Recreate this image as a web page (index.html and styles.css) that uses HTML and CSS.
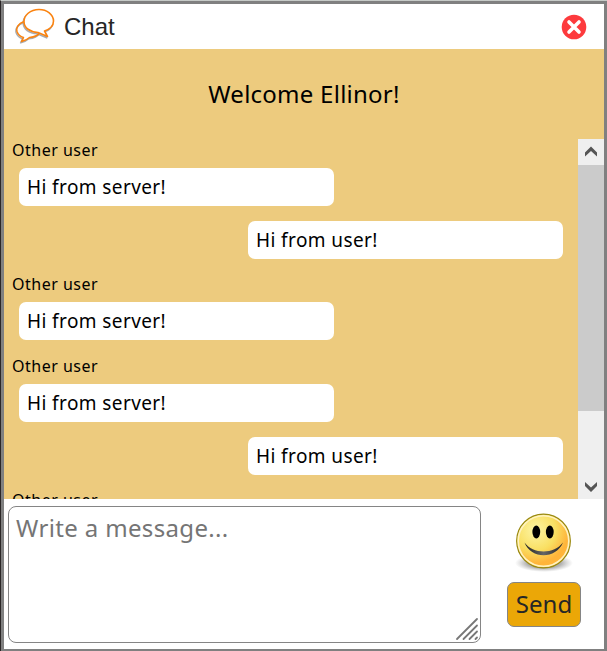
FILE: index.html
```html
<!DOCTYPE html>
<html lang="en">
<head>
<meta charset="utf-8">
<title>Chat</title>
<link rel="stylesheet" href="styles.css">
</head>
<body>
<div class="window">
  <header class="titlebar">
    <svg class="logo" viewBox="0 0 42 38" width="42" height="38">
      <g fill="none" stroke-linejoin="round">
        <g stroke="#8b8f96" stroke-width="1.600" opacity=".75" transform="translate(-.8 1.300)">
          <path d="M9 13.500C3 15.500 1 20 2 23.500c1 3 3 5 6.500 6l-2 4c4-1 6-2 8-4 5-.5 9-2.500 11-5.500"/>
          <path d="M24 1.500C15 1.500 9 7.500 9 13.500 9 20 15 24 23 24.500l9.500 4-3-5.500c6-2 9-5.500 9-10C38.500 6.500 32 1.500 24 1.500z"/>
        </g>
        <path stroke="#fa8310" stroke-width="1.500" d="M9 13.500C3 15.500 1 20 2 23.500c1 3 3 5 6.500 6l-2 4c4-1 6-2 8-4 5-.5 9-2.500 11-5.500"/>
        <path fill="#fff" stroke="#fa8310" stroke-width="1.600" d="M24 1.500C15 1.500 9 7.500 9 13.500 9 20 15 24 23 24.500l9.500 4-3-5.500c6-2 9-5.500 9-10C38.500 6.500 32 1.500 24 1.500z"/>
      </g>
    </svg>
    <h1 class="title">Chat</h1>
    <svg class="close" viewBox="0 0 26 26" width="26" height="26">
      <circle cx="13" cy="13" r="12.300" fill="#fd3a3d"/>
      <path d="M8 8l10 10M18 8L8 18" stroke="#fff" stroke-width="3.600" stroke-linecap="round"/>
    </svg>
  </header>
  <main class="conversation">
    <h2 class="welcome">Welcome Ellinor!</h2>
    <div class="history">
      <div class="messages">
        <p class="sender">Other user</p>
        <p class="bubble">Hi from server!</p>
        <p class="bubble bubble-own">Hi from user!</p>
        <p class="sender">Other user</p>
        <p class="bubble">Hi from server!</p>
        <p class="sender">Other user</p>
        <p class="bubble">Hi from server!</p>
        <p class="bubble bubble-own">Hi from user!</p>
        <p class="sender">Other user</p>
      </div>
      <div class="scrollbar">
        <svg class="arrow" viewBox="0 0 26 26" width="26" height="26"><path d="M7 13.400l6-5.900 6 5.900v4l-6-5.500-6 5.500z" fill="#555"/></svg>
        <div class="thumb"></div>
        <svg class="arrow arrow-down" viewBox="0 0 26 26" width="26" height="26"><path d="M7 9l6 5.500L19 9v4l-6 5.900L7 13z" fill="#555"/></svg>
      </div>
    </div>
  </main>
  <footer class="composer">
    <div class="input">
      <span class="placeholder">Write a message...</span>
      <svg class="grip" viewBox="0 0 24 24" width="24" height="24"><path d="M2 22L22 2M8.500 22L22 8.500M14.500 22l7.500-7.500M20.500 22l1.500-1.500" stroke="#777" stroke-width="1.800" stroke-linecap="round"/></svg>
    </div>
    <div class="actions">
      <svg class="smiley" viewBox="0 0 62 62" width="62" height="62">
        <defs>
          <radialGradient id="face" cx=".35" cy=".3" r=".75">
            <stop offset="0" stop-color="#fcf5a5"/>
            <stop offset=".5" stop-color="#f9df62"/>
            <stop offset=".82" stop-color="#ffb43a"/>
            <stop offset="1" stop-color="#ffb638"/>
          </radialGradient>
          <radialGradient id="shade">
            <stop offset="0" stop-color="#555" stop-opacity=".8"/>
            <stop offset=".6" stop-color="#777" stop-opacity=".55"/>
            <stop offset="1" stop-color="#999" stop-opacity="0"/>
          </radialGradient>
          <linearGradient id="mouth">
            <stop offset="0" stop-color="#222"/>
            <stop offset=".5" stop-color="#666"/>
            <stop offset="1" stop-color="#222"/>
          </linearGradient>
        </defs>
        <ellipse cx="31" cy="52" rx="29" ry="9" fill="url(#shade)"/>
        <circle cx="30.500" cy="30" r="26.800" fill="url(#face)" stroke="#9a8a12" stroke-width="1.300"/>
        <circle cx="30.500" cy="30" r="25.300" fill="none" stroke="#fff3c0" stroke-width="1.600"/>
        <ellipse cx="23.300" cy="21" rx="3.900" ry="6.500"/>
        <ellipse cx="36.800" cy="21" rx="3.900" ry="6.500"/>
        <path d="M11.500 31.500C20 43.500 41 43.500 50 31.500 43 48.500 18 48.500 11.500 31.500z" fill="url(#mouth)"/>
      </svg>
      <button class="send">Send</button>
    </div>
  </footer>
</div>
</body>
</html>
```
FILE: styles.css
```css
* { box-sizing: border-box; }
body {
  margin: 0;
  height: 651px;
  overflow: hidden;
  border-top: 1px solid #c6cac7;
  border-left: 1px solid #2b2727;
  font-family: "Noto Sans", sans-serif;
  color: #000;
}
.window {
  display: flex;
  flex-direction: column;
  height: 650px;
  border: 3px solid #808080;
  border-bottom-width: 2px;
  background: #fff;
}
.titlebar {
  display: flex;
  align-items: center;
  flex: 0 0 45px;
  padding: 0 17px 0 11px;
}
.title {
  flex: 1;
  margin: 0 0 0 7px;
  font: 400 24px/28px "Liberation Sans", sans-serif;
  color: #262626;
}
.close { margin-top: 1px; }
.conversation {
  flex: 0 0 450px;
  background: #edcb7e;
}
.welcome {
  height: 90px;
  margin: 0;
  font-size: 24px;
  font-weight: 400;
  line-height: 90px;
  letter-spacing: .25px;
  text-align: center;
}
.history {
  display: flex;
  height: 360px;
}
.messages {
  flex: 1;
  display: flex;
  flex-direction: column;
  overflow: hidden;
  padding: 0 15px 0 8px;
}
.sender {
  flex: none;
  height: 29px;
  margin: 0;
  font-size: 16px;
  line-height: 22px;
  letter-spacing: .5px;
}
.bubble {
  flex: none;
  width: 315px;
  height: 38px;
  margin: 0 0 15px 7px;
  padding: 0 8px;
  border-radius: 7px;
  background: #fff;
  font-size: 19px;
  line-height: 38px;
  letter-spacing: .4px;
}
.bubble-own { align-self: flex-end; margin-left: 0; }
.bubble-own + .sender { margin-top: -1px; }
.scrollbar {
  display: flex;
  flex-direction: column;
  justify-content: space-between;
  width: 26px;
  background: #efefef;
}
.arrow { flex: none; }
.thumb {
  height: 246px;
  margin-bottom: auto;
  background: #cbcbcb;
}
.composer {
  display: flex;
  flex: 1;
  padding: 7px 0 6px 4px;
}
.input {
  display: flex;
  justify-content: space-between;
  width: 473px;
  height: 137px;
  padding: 0 1px 1px 7px;
  border: 1px solid #858585;
  border-radius: 8px;
}
.placeholder {
  font-size: 24px;
  line-height: 41px;
  letter-spacing: .35px;
  color: #757575;
  white-space: nowrap;
}
.grip { align-self: flex-end; }
.actions {
  display: flex;
  flex: 1;
  flex-direction: column;
  align-items: center;
  padding-left: 3px;
}
.smiley { margin-top: 5px; }
.send {
  width: 74px;
  height: 45px;
  margin-top: 9px;
  padding: 0 0 2px;
  border: 1px solid #858585;
  border-radius: 7px;
  background: #eba707;
  color: #262626;
  font: 400 24px/40px "Noto Sans", sans-serif;
}
```
